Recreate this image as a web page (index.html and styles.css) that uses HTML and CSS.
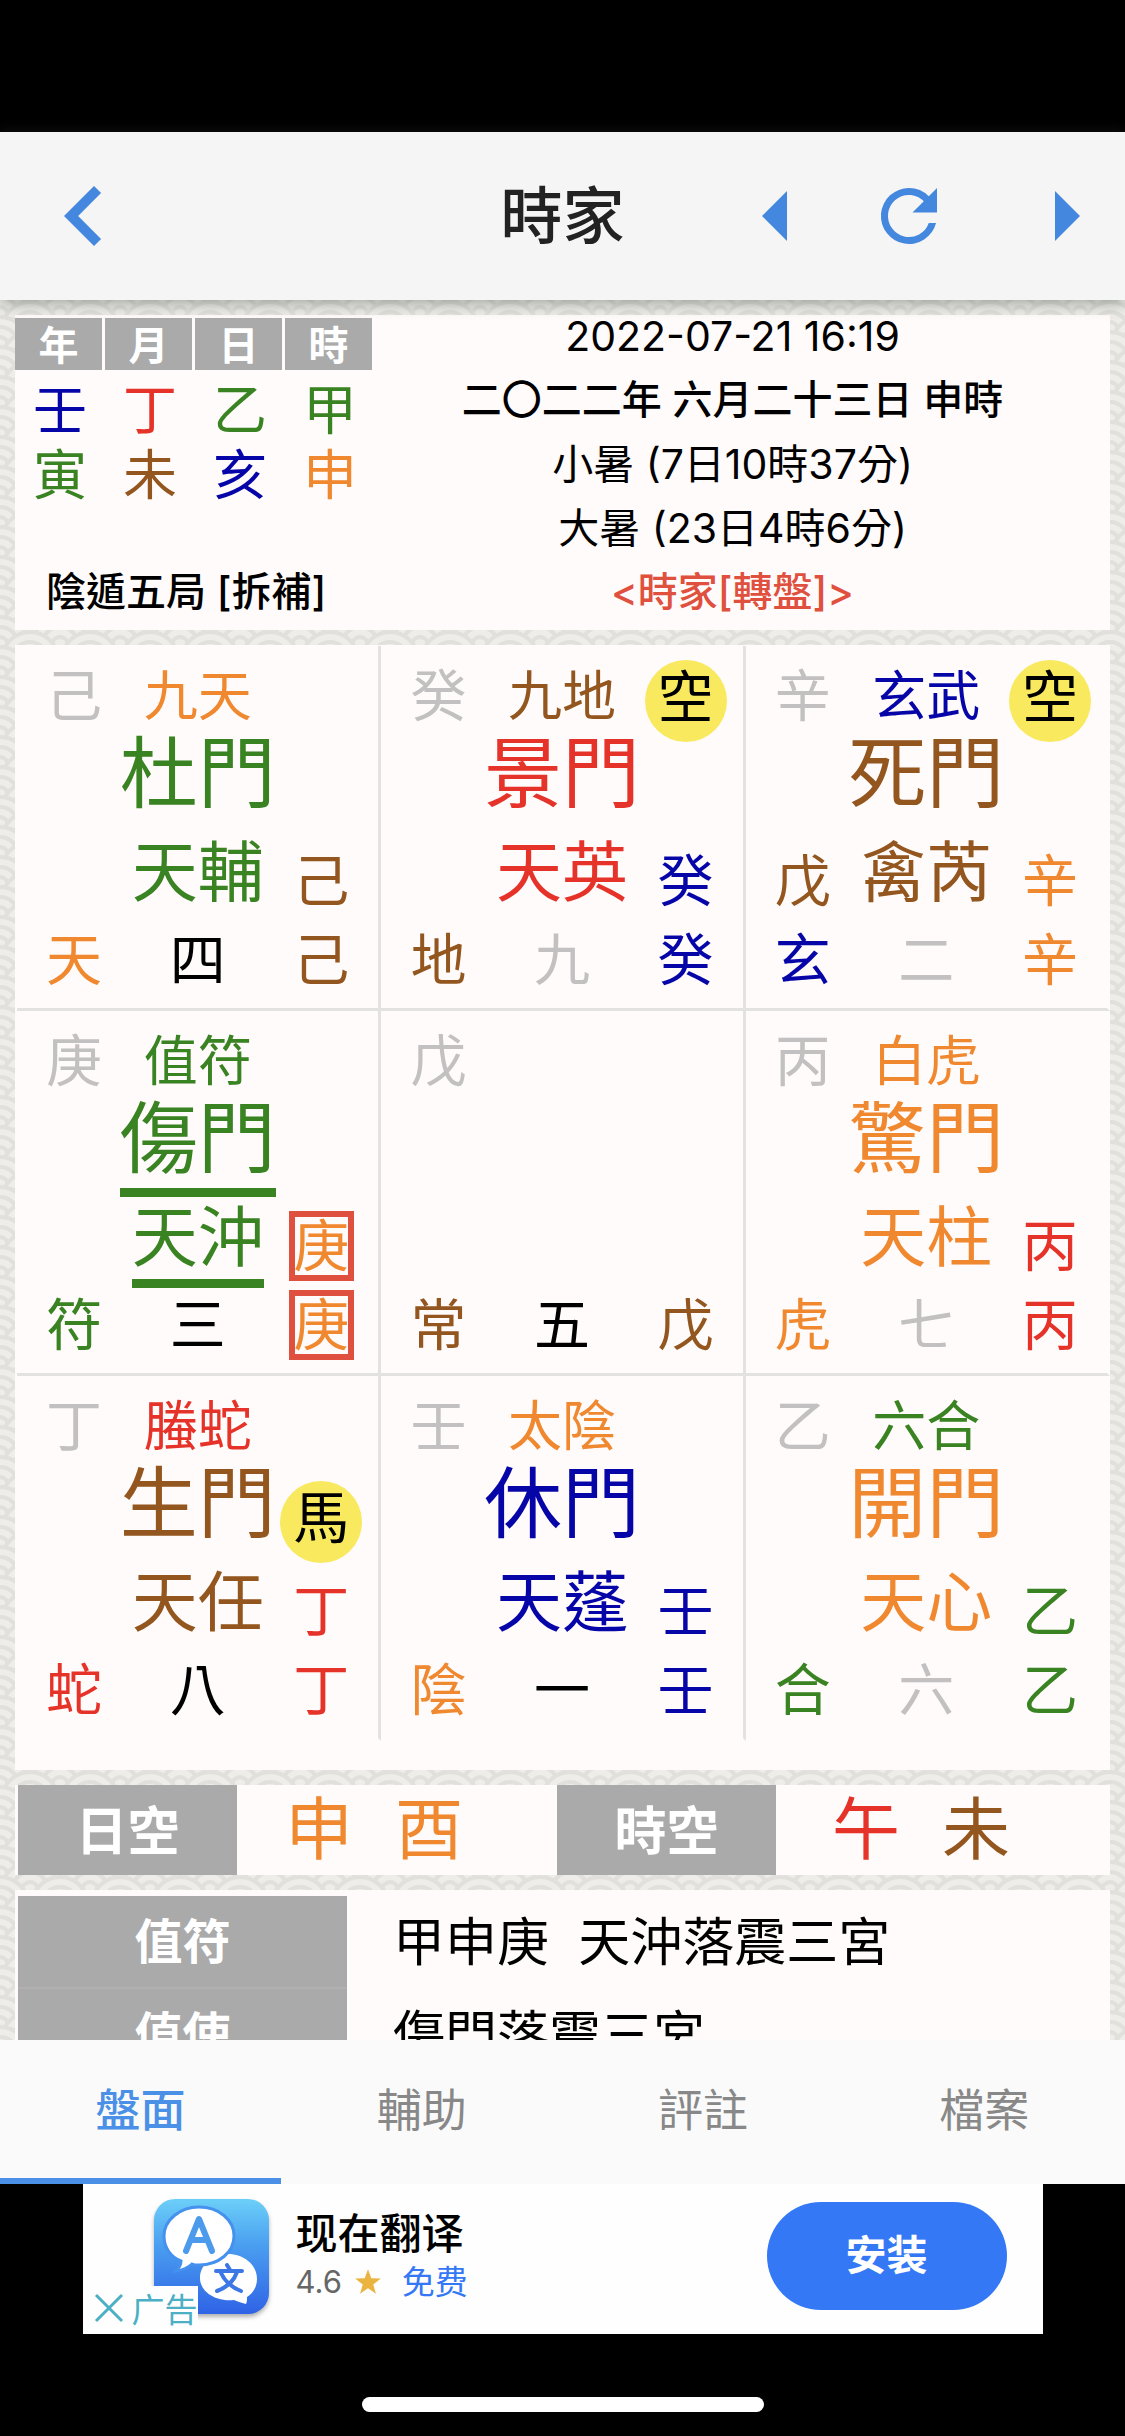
FILE: index.html
```html
<!DOCTYPE html>
<html lang="zh-Hant">
<head>
<meta charset="utf-8">
<meta name="viewport" content="width=device-width, initial-scale=1">
<title>時家</title>
<link rel="stylesheet" href="styles.css">
</head>
<body>
<header class="topbar">
  <button class="icon-btn back" aria-label="返回"><svg width="120" height="120" viewBox="0 0 24 24"><path d="M15.41 7.41 14 6l-6 6 6 6 1.41-1.41L10.83 12z"/></svg></button>
  <h1 class="title">時家</h1>
  <div class="actions">
    <button class="icon-btn" aria-label="上一時"><svg width="120" height="120" viewBox="0 0 24 24"><path d="M14 7l-5 5 5 5z"/></svg></button>
    <button class="icon-btn refresh" aria-label="更新"><svg width="84" height="84" viewBox="0 0 24 24"><path d="M17.65 6.35A7.96 7.96 0 0 0 12 4a8 8 0 1 0 7.73 10h-2.08A6 6 0 1 1 12 6c1.66 0 3.14.69 4.22 1.78L13 11h7V4z"/></svg></button>
    <button class="icon-btn" aria-label="下一時"><svg width="120" height="120" viewBox="0 0 24 24"><path d="M10 17l5-5-5-5z"/></svg></button>
  </div>
</header>

<main class="content">
  <section class="panel summary">
    <div class="summary-left">
      <table class="pillars">
        <thead><tr><th>年</th><th>月</th><th>日</th><th>時</th></tr></thead>
        <tbody>
          <tr><td class="blue">壬</td><td class="red">丁</td><td class="green">乙</td><td class="green">甲</td></tr>
          <tr><td class="green">寅</td><td class="brown">未</td><td class="blue">亥</td><td class="orange">申</td></tr>
        </tbody>
      </table>
      <p class="ju">陰遁五局 [拆補]</p>
    </div>
    <div class="dates">
      <p>2022-07-21 16:19</p>
      <p class="medium">二〇二二年 六月二十三日 申時</p>
      <p>小暑 (7日10時37分)</p>
      <p>大暑 (23日4時6分)</p>
      <p class="medium mode">&lt;時家[轉盤]&gt;</p>
    </div>
  </section>

  <section class="panel board">
    <article class="palace">
      <div class="side"><span class="gray">己</span><i></i><i></i><span class="orange">天</span></div>
      <div class="mid"><span class="god orange">九天</span><span class="gate green">杜門</span><span class="star green">天輔</span><span class="num">四</span></div>
      <div class="side"><i></i><i></i><span class="brown">己</span><span class="brown">己</span></div>
    </article>
    <article class="palace">
      <div class="side"><span class="gray">癸</span><i></i><i></i><span class="brown">地</span></div>
      <div class="mid"><span class="god brown">九地</span><span class="gate red">景門</span><span class="star red">天英</span><span class="num gray">九</span></div>
      <div class="side"><span class="mark">空</span><i></i><span class="blue">癸</span><span class="blue">癸</span></div>
    </article>
    <article class="palace">
      <div class="side"><span class="gray">辛</span><i></i><span class="brown">戊</span><span class="blue">玄</span></div>
      <div class="mid"><span class="god blue">玄武</span><span class="gate brown">死門</span><span class="star brown">禽芮</span><span class="num gray">二</span></div>
      <div class="side"><span class="mark">空</span><i></i><span class="orange">辛</span><span class="orange">辛</span></div>
    </article>
    <article class="palace">
      <div class="side"><span class="gray">庚</span><i></i><i></i><span class="green">符</span></div>
      <div class="mid"><span class="god green">值符</span><span class="gate green lined">傷門</span><span class="star green lined">天沖</span><span class="num">三</span></div>
      <div class="side"><i></i><i></i><span class="orange boxed">庚</span><span class="orange boxed">庚</span></div>
    </article>
    <article class="palace">
      <div class="side"><span class="gray">戊</span><i></i><i></i><span class="brown">常</span></div>
      <div class="mid"><span class="god"></span><span class="gate"></span><span class="star"></span><span class="num">五</span></div>
      <div class="side"><i></i><i></i><i></i><span class="brown">戊</span></div>
    </article>
    <article class="palace">
      <div class="side"><span class="gray">丙</span><i></i><i></i><span class="orange">虎</span></div>
      <div class="mid"><span class="god orange">白虎</span><span class="gate orange">驚門</span><span class="star orange">天柱</span><span class="num gray">七</span></div>
      <div class="side"><i></i><i></i><span class="red">丙</span><span class="red">丙</span></div>
    </article>
    <article class="palace">
      <div class="side"><span class="gray">丁</span><i></i><i></i><span class="red">蛇</span></div>
      <div class="mid"><span class="god red">螣蛇</span><span class="gate brown">生門</span><span class="star brown">天任</span><span class="num">八</span></div>
      <div class="side"><i></i><span class="mark">馬</span><span class="red">丁</span><span class="red">丁</span></div>
    </article>
    <article class="palace">
      <div class="side"><span class="gray">壬</span><i></i><i></i><span class="orange">陰</span></div>
      <div class="mid"><span class="god orange">太陰</span><span class="gate blue">休門</span><span class="star blue">天蓬</span><span class="num">一</span></div>
      <div class="side"><i></i><i></i><span class="blue">壬</span><span class="blue">壬</span></div>
    </article>
    <article class="palace">
      <div class="side"><span class="gray">乙</span><i></i><i></i><span class="green">合</span></div>
      <div class="mid"><span class="god green">六合</span><span class="gate orange">開門</span><span class="star orange">天心</span><span class="num gray">六</span></div>
      <div class="side"><i></i><i></i><span class="green">乙</span><span class="green">乙</span></div>
    </article>
  </section>

  <section class="panel voids">
    <h2 class="void-label">日空</h2>
    <div class="void-values"><span class="orange">申</span><span class="orange">酉</span></div>
    <h2 class="void-label">時空</h2>
    <div class="void-values hour"><span class="red">午</span><span class="brown">未</span></div>
  </section>

  <section class="panel">
    <table class="notes">
      <tr><th>值符</th><td>甲申庚  天沖落震三宮</td></tr>
      <tr><th>值使</th><td>傷門落震三宮</td></tr>
    </table>
  </section>
</main>

<nav class="tabs">
  <a class="tab active" href="#chart">盤面</a>
  <a class="tab" href="#aid">輔助</a>
  <a class="tab" href="#comment">評註</a>
  <a class="tab" href="#files">檔案</a>
</nav>

<footer class="bottom">
  <aside class="ad" lang="zh-Hans">
    <svg class="app-icon" width="115" height="115" viewBox="0 0 115 115" aria-hidden="true">
      <defs><linearGradient id="sky" x1="0" y1="0" x2="0" y2="1"><stop offset="0" stop-color="#6ccff8"/><stop offset=".4" stop-color="#4a9ff0"/><stop offset="1" stop-color="#2f63e6"/></linearGradient></defs>
      <rect width="115" height="115" rx="21" fill="url(#sky)"/>
      <path fill="#fff" d="M74 55c15 0 29 10 29 25 0 8-4 14-10 18 0 3 0 5-1 7-5-1-9-3-12-4-18 2-34-8-34-22 0-13 12-24 28-24z"/>
      <path fill="#fff" stroke="#4591ee" stroke-width="3" d="M45 8c20 0 35 13 35 29S65 66 45 66c-2 0-5 0-7-1-4 4-9 6-16 7 3-3 5-7 5-10C17 58 10 49 10 37 10 21 26 8 45 8z"/>
      <g fill="none" stroke="#4b9aec" stroke-width="6" stroke-linecap="round" stroke-linejoin="round"><path d="M32 52 45 20l13 32M37 41h16"/></g>
      <g fill="none" stroke="#3b78e6" stroke-width="4" stroke-linecap="round"><path d="M62 72h26M73 66l3 5M83 73c-3 9-9 15-20 19M67 74c4 9 10 14 20 18"/></g>
    </svg>
    <button class="ad-badge"><svg width="30" height="30" viewBox="0 0 30 30" aria-hidden="true"><path d="M2 2l26 26M28 2L2 28" fill="none" stroke="#4bafc5" stroke-width="3"/></svg>广告</button>
    <div class="ad-text">
      <p class="ad-name">现在翻译</p>
      <p class="ad-meta">4.6<svg width="28" height="28" viewBox="0 0 24 24" aria-hidden="true"><path fill="#ebb340" d="M12 1l2.8 7.8 8.2.3-6.500 5 2.300 8L12 17.400 5.200 22.100l2.300-8L1 9.100l8.200-.3z"/></svg><a href="#install">免费</a></p>
    </div>
    <button class="install">安装</button>
  </aside>
  <div class="home-bar"></div>
</footer>
</body>
</html>
```
FILE: styles.css
```css
* { box-sizing: border-box; }

body {
  margin: 0;
  height: 100vh;
  padding-top: 132px;
  display: flex;
  flex-direction: column;
  background: #000;
  color: #000;
  font-family: Inter, "Noto Sans CJK TC", sans-serif;
  overflow: hidden;
}

h1, h2, p { margin: 0; }
a { text-decoration: none; }
button { border: 0; padding: 0; background: none; font: inherit; cursor: pointer; }

.blue { color: #0606a8; }
.red { color: #e63329; }
.green { color: #3a8322; }
.brown { color: #93561f; }
.orange { color: #f08830; }
.gray { color: #c2c0c0; }

/* Top bar */
.topbar {
  flex: none;
  height: 168px;
  display: grid;
  grid-template-columns: 1fr auto 1fr;
  align-items: center;
  background: #f5f5f5;
  box-shadow: 0 3px 15px rgba(60, 70, 60, .45);
  z-index: 1;
}
.icon-btn { display: flex; }
.icon-btn svg { fill: #4487de; }
.back { justify-self: start; margin-left: 24px; }
.refresh { margin: 0 54px 0 30px; }
.title { padding-top: 2px; font-size: 62px; line-height: 80px; font-weight: 500; color: #222; }
.actions { display: flex; align-items: center; justify-self: end; }

/* Scrolling content */
.content {
  flex: 1;
  min-height: 0;
  overflow: hidden;
  padding: 15px 15px 0;
  display: flex;
  flex-direction: column;
  gap: 15px;
  background: #eeede9 url("data:image/svg+xml,%3Csvg xmlns='http://www.w3.org/2000/svg' width='60' height='30'%3E%3Cg fill='%23eeede9' stroke='%23e1e0dc' stroke-width='4'%3E%3Cg id='a'%3E%3Ccircle cx='0' cy='15' r='28'/%3E%3Ccircle cx='0' cy='15' r='18'/%3E%3Ccircle cx='0' cy='15' r='8'/%3E%3Ccircle cx='60' cy='15' r='28'/%3E%3Ccircle cx='60' cy='15' r='18'/%3E%3Ccircle cx='60' cy='15' r='8'/%3E%3C/g%3E%3Ccircle cx='30' cy='30' r='28'/%3E%3Ccircle cx='30' cy='30' r='18'/%3E%3Ccircle cx='30' cy='30' r='8'/%3E%3Ccircle cx='0' cy='45' r='28'/%3E%3Ccircle cx='0' cy='45' r='18'/%3E%3Ccircle cx='60' cy='45' r='28'/%3E%3Ccircle cx='60' cy='45' r='18'/%3E%3C/g%3E%3C/svg%3E");
}
.panel { flex: none; background: #fffbfa; }

/* Date summary */
.summary {
  display: grid;
  grid-template-columns: 360px 1fr;
  height: 315px;
  padding-top: 3px;
}
.pillars { border-spacing: 0; table-layout: fixed; width: 360px; }
.pillars th {
  padding: 4px 0 0;
  border-right: 3px solid #fffbfa;
  background: #aaa;
  color: #fff;
  font-size: 40px;
  line-height: 48px;
  font-weight: 700;
}
.pillars td { padding: 0; text-align: center; font-size: 54px; line-height: 65px; }
.pillars tbody tr:first-child td { padding-top: 8px; }
.ju { margin-top: 52px; padding-left: 31px; font-size: 40px; line-height: 64px; font-weight: 500; }
.dates {
  margin-top: -14px;
  padding-right: 20px;
  text-align: center;
  font-size: 41px;
  line-height: 64px;
}
.medium { font-size: 40px; font-weight: 500; }
.mode { color: #e0503e; }

/* Nine-palace board */
.board {
  display: grid;
  grid-template-columns: repeat(3, 1fr);
  grid-auto-rows: 365px;
  padding: 1px 0 29px 2px;
}
.palace {
  display: grid;
  grid-template-columns: 1fr 133px 1fr;
  border: solid #e4e1e1;
  border-width: 0 3px 3px 0;
}
.palace:nth-child(3n) { border-right-color: transparent; }
.palace:nth-child(n+7) { border-bottom-color: transparent; }
.side {
  display: grid;
  grid-template-rows: 82px 86px 70px 70px;
  gap: 9px;
  padding-top: 14px;
  justify-items: center;
  align-content: start;
}
.side > span { font-size: 56px; line-height: 70px; }
.side .gray { line-height: 73px; }
.side .mark {
  width: 82px;
  height: 82px;
  border-radius: 50%;
  background: #f9e95f;
  text-align: center;
  line-height: 74px;
}
.side .boxed {
  width: 65px;
  height: 70px;
  border: 6px solid #e0503e;
  display: flex;
  align-items: center;
  justify-content: center;
}
.mid {
  display: flex;
  flex-direction: column;
  align-items: center;
  padding-top: 14px;
  white-space: nowrap;
}
.god { height: 72px; font-size: 54px; line-height: 74px; }
.gate { height: 100px; font-size: 78px; line-height: 84px; }
.star { height: 91px; font-size: 66px; line-height: 80px; }
.num { font-size: 56px; line-height: 74px; }
.lined { border-bottom: 9px solid #3a8322; }

/* Void branches */
.voids {
  display: grid;
  grid-template-columns: 219px 1fr 219px 334px;
  grid-template-rows: 90px;
  padding-left: 3px;
}
.void-label {
  background: #aaa;
  color: #fff;
  text-align: center;
  font-size: 52px;
  line-height: 94px;
  font-weight: 700;
}
.void-values {
  display: grid;
  grid-template-columns: 110px 110px;
  padding-left: 27px;
  text-align: center;
  font-size: 68px;
  line-height: 88px;
}
.hour { padding-left: 35px; }

/* Notes */
.notes { margin: 0 0 0 3px; padding-top: 6px; border-spacing: 0; width: calc(100% - 3px); }
.notes th {
  width: 329px;
  height: 93px;
  padding: 0;
  border-bottom: 2px solid #b1afaf;
  background: #aaa;
  color: #fff;
  font-size: 48px;
  line-height: 91px;
  font-weight: 700;
}
.notes td { padding: 0 0 0 46px; font-size: 52px; line-height: 91px; white-space: pre; }

/* Tabs */
.tabs { flex: none; display: grid; grid-template-columns: repeat(4, 1fr); background: #fafafa; }
.tab {
  height: 144px;
  border-bottom: 6px solid transparent;
  text-align: center;
  font-size: 45px;
  line-height: 142px;
  color: #888;
}
.active { color: #4a90e6; border-color: #4a90e6; font-weight: 500; }

/* Advert and home indicator */
.bottom { flex: none; height: 252px; display: flex; flex-direction: column; align-items: center; }
.ad {
  position: relative;
  width: 960px;
  max-width: 100%;
  height: 150px;
  padding: 0 36px 6px 71px;
  display: flex;
  align-items: center;
  background: #fefefe;
  font-family: Inter, "Noto Sans CJK SC", sans-serif;
}
.app-icon { filter: drop-shadow(0 3px 2px rgba(0, 0, 0, .3)); }
.ad-badge {
  position: absolute;
  left: 0;
  bottom: 0;
  width: 115px;
  height: 48px;
  padding: 0 0 4px 11px;
  display: flex;
  align-items: center;
  gap: 8px;
  background: #fefefe;
  color: #4bafc5;
  font-size: 33px;
  white-space: nowrap;
}
.ad-text { margin-left: 27px; flex: 1; }
.ad-name { font-size: 42px; line-height: 52px; font-weight: 500; }
.ad-meta { display: flex; align-items: center; font-size: 31px; line-height: 44px; color: #666; }
.ad-meta svg { margin: 0 20px 0 12px; }
.ad-meta a { color: #3478f6; font-size: 33px; }
.install {
  width: 240px;
  height: 108px;
  padding-bottom: 8px;
  border-radius: 54px;
  background: #3478f6;
  color: #fff;
  font-size: 41px;
  font-weight: 700;
}
.home-bar { margin-top: 63px; width: 402px; height: 15px; border-radius: 8px; background: #fff; }
```
